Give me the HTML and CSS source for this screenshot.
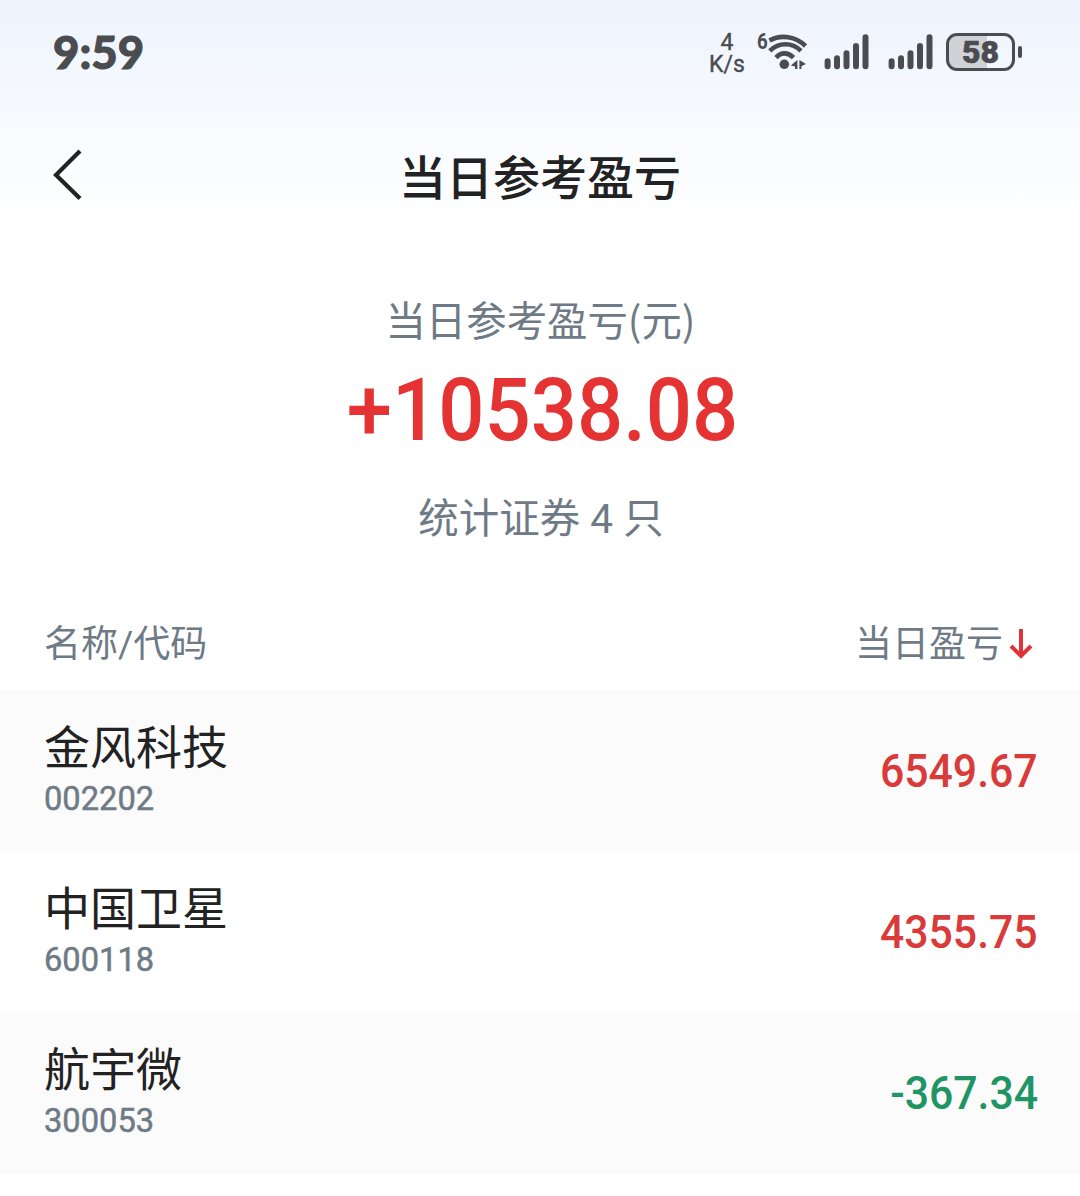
FILE: index.html
```
<!DOCTYPE html>
<html lang="zh-CN">
<head>
    <meta charset="UTF-8">
    <meta name="viewport" content="width=device-width, initial-scale=1.0">
    <title>当日参考盈亏</title>
    <link rel="stylesheet" href="styles.css">
</head>
<body>
    <div class="top">
        <div class="status-bar">
            <div class="clock">9:59</div>
            <div class="status-icons">
                <div class="speed"><span>4</span><span>K/s</span></div>
                <div class="wifi">
                    <span class="wifi-gen">6</span>
                    <svg width="40" height="38" viewBox="0 0 40 38" fill="none" stroke="#4a4c50" stroke-width="4.6" stroke-linecap="butt">
                        <path d="M1.5 7.5C13 1 28 3.5 37.5 13"/>
                        <path d="M1.8 17.8C11 9 24 9 33 17.8"/>
                        <path d="M8 24.6C13 19 20 19 25.5 24.6"/>
                        <circle cx="16.3" cy="31.3" r="4.8" fill="#4a4c50" stroke="none"/>
                        <path d="M29.4 27v9h-2.4v-2.6L22.8 32.6zM31.4 27v9h2v-2.8L38 31z" fill="#4a4c50" stroke="none"/>
                    </svg>
                </div>
                <svg class="signal" width="46" height="36" viewBox="0 0 46 36" stroke="#4a4c50" stroke-width="6" stroke-linecap="round">
                    <path d="M3.6 27.2v5M13 24.2v8M22.5 19.2v13M32 12v20.2M41.5 3.2v29"/>
                </svg>
                <svg class="signal" width="46" height="36" viewBox="0 0 46 36" stroke="#4a4c50" stroke-width="6" stroke-linecap="round">
                    <path d="M3.6 27.2v5M13 24.2v8M22.5 19.2v13M32 12v20.2M41.5 3.2v29"/>
                </svg>
                <div class="battery"><span>58</span></div>
                <div class="battery-cap"></div>
            </div>
        </div>
        <div class="nav">
            <svg class="back" width="30" height="52" viewBox="0 0 30 52" fill="none" stroke="#222" stroke-width="4.2">
                <path d="M28 2L4 26L28 49.5"/>
            </svg>
            <h1 class="title">当日参考盈亏</h1>
        </div>
    </div>

    <div class="summary">
        <div class="summary-label">当日参考盈亏(元)</div>
        <div class="summary-value">+10538.08</div>
        <div class="summary-count">统计证券 4 只</div>
    </div>

    <div class="list-head">
        <span>名称/代码</span>
        <span class="sort">当日盈亏
            <svg width="24" height="32" viewBox="0 0 24 32" fill="none" stroke="#e03336" stroke-width="4">
                <path d="M12 2v27M2 19l10 10 10-10"/>
            </svg>
        </span>
    </div>

    <div class="list">
        <div class="row">
            <div>
                <div class="name">金风科技</div>
                <div class="code">002202</div>
            </div>
            <div class="amount up">6549.67</div>
        </div>
        <div class="row">
            <div>
                <div class="name">中国卫星</div>
                <div class="code">600118</div>
            </div>
            <div class="amount up">4355.75</div>
        </div>
        <div class="row">
            <div>
                <div class="name">航宇微</div>
                <div class="code">300053</div>
            </div>
            <div class="amount down">-367.34</div>
        </div>
    </div>
</body>
</html>
```

FILE: styles.css
```
* {
    margin: 0;
    padding: 0;
    box-sizing: border-box;
}

body {
    font-family: Roboto, "Noto Sans CJK SC", sans-serif;
    background: #fff;
    color: #222;
    height: 1196px;
    overflow: hidden;
}

.top {
    height: 240px;
    background: linear-gradient(180deg, #eef4fe 0%, #f4f8fe 35%, #fbfcff 68%, #fff 100%);
}

.status-bar {
    display: flex;
    justify-content: space-between;
    align-items: center;
    height: 104px;
    padding: 0 58px 0 53px;
}

.clock {
    font-family: Lato, sans-serif;
    font-size: 45.5px;
    font-weight: 900;
    line-height: 60px;
    color: #4a4c50;
    -webkit-text-stroke: 1px #4a4c50;
}

.status-icons {
    display: flex;
    align-items: center;
    color: #4a4c50;
}

.speed {
    display: flex;
    flex-direction: column;
    align-items: center;
    width: 36px;
    margin-right: 12px;
    padding-top: 3px;
    font-size: 23px;
    line-height: 22px;
    -webkit-text-stroke: 0.4px #4a4c50;
}

.wifi {
    display: flex;
    align-items: flex-start;
    margin-right: 16px;
}

.wifi-gen {
    width: 11px;
    font-size: 22px;
    font-weight: 700;
    line-height: 18px;
    transform: scaleX(0.85);
    transform-origin: left;
}

.signal {
    margin-right: 18px;
}

.signal + .signal {
    margin-right: 12px;
}

.battery {
    width: 69px;
    height: 38px;
    border: 3px solid #4a4c50;
    border-radius: 11px;
    background: linear-gradient(90deg, #d0d2d7 60%, transparent 60%);
    font-size: 32px;
    font-weight: 900;
    line-height: 33px;
    text-align: center;
    -webkit-text-stroke: 0.6px #4a4c50;
}

.battery-cap {
    width: 4px;
    height: 12px;
    margin-left: 3px;
    border-radius: 2px;
    background: #4a4c50;
}

.nav {
    display: flex;
    align-items: center;
    height: 142px;
    padding: 0 52px;
}

.title {
    flex: 1;
    margin-right: 30px;
    padding-top: 7px;
    font-size: 47px;
    font-weight: 500;
    line-height: 60px;
    text-align: center;
}

.summary {
    display: flex;
    flex-direction: column;
    align-items: center;
    height: 356px;
    padding-top: 49px;
    color: #6e7a85;
}

.summary-label {
    font-family: "Noto Sans CJK SC", sans-serif;
    font-size: 40.4px;
    line-height: 60px;
    padding-left: 1px;
}

.summary-value {
    margin-top: 11px;
    padding-left: 5px;
    font-size: 88px;
    font-weight: 500;
    line-height: 100px;
    color: #e53333;
    transform: scaleX(0.925);
}

.summary-count {
    margin-top: 29px;
    padding-left: 2px;
    font-size: 40.5px;
    line-height: 60px;
}

.list-head {
    display: flex;
    justify-content: space-between;
    align-items: center;
    height: 94px;
    padding: 0 47px 4px 44px;
    font-size: 37px;
    color: #6e7a85;
}

.sort {
    display: flex;
    align-items: center;
    gap: 6px;
}

.sort svg {
    margin-top: 4px;
}

.row {
    display: flex;
    justify-content: space-between;
    align-items: center;
    height: 161.4px;
    padding: 0 42px 0 44px;
}

.row:nth-child(odd) {
    background: #fbfbfb;
}

.name {
    font-size: 46px;
    line-height: 60px;
}

.code {
    margin-bottom: 5px;
    font-size: 34px;
    line-height: 41px;
    color: #6e7a85;
    transform: scaleX(0.96);
    transform-origin: left;
    -webkit-text-stroke: 0.5px #6e7a85;
}

.amount {
    font-size: 46px;
    font-weight: 500;
    line-height: 60px;
    transform: scaleX(0.93);
    transform-origin: right;
}

.up {
    color: #d93a3a;
}

.down {
    color: #1f9465;
}
```
